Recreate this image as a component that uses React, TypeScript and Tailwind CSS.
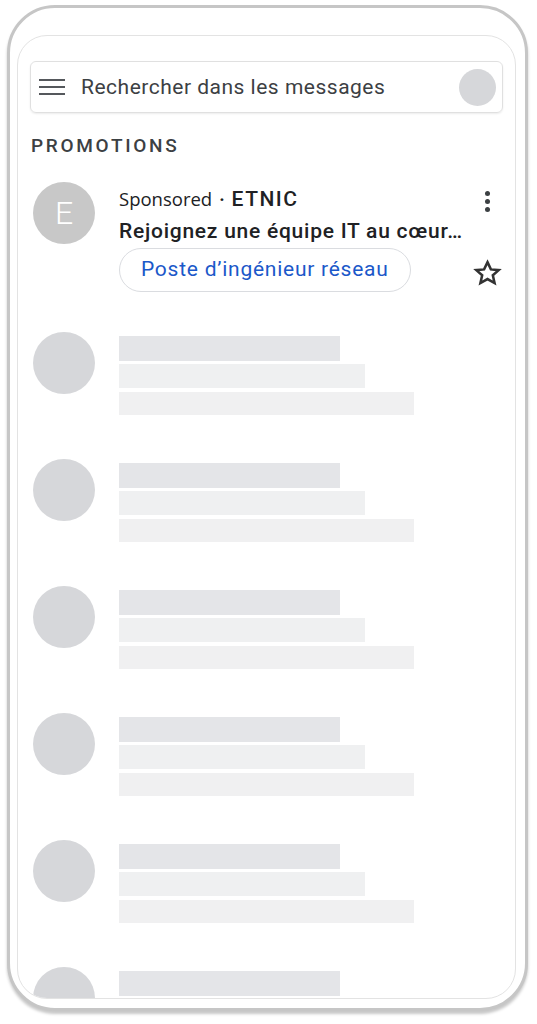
import React from "react";

const rows = [0, 1, 2, 3, 4, 5];

function Skeleton() {
  return (
    <div className="flex items-start pl-[15px]">
      <div className="w-[62px] h-[62px] rounded-full bg-[#d6d7da] shrink-0" />
      <div className="ml-[24px] mt-[4px] flex flex-col gap-[3px]">
        <div className="w-[221px] h-[25px] bg-[#e4e5e8]" />
        <div className="w-[246px] h-[24px] bg-[#eff0f1]" />
        <div className="mt-[1px] w-[295px] h-[23px] bg-[#f0f0f1]" />
      </div>
    </div>
  );
}

export default function App() {
  return (
    <div className="w-[537px] h-[1024px] bg-white overflow-hidden" style={{ fontFamily: "Roboto, 'Noto Sans', sans-serif" }}>
      <div className="ml-[7px] mt-[5px] w-[521px] h-[1006px] rounded-[48px] border-[3px] border-[#c6c6c6] bg-white shadow-[0_3px_3px_rgba(0,0,0,0.22)] px-[7px] pt-[27px]">
        <div className="w-[499px] h-[964px] rounded-[30px] border border-[#e3e3e3] overflow-hidden">
          {/* Search bar */}
          <div className="mx-[12px] mt-[25px] h-[52px] rounded-[6px] border border-[#e0e0e0] shadow-[0_1px_2px_rgba(0,0,0,0.08)] flex items-center pl-[8px] pr-[6px]">
            <div className="w-[26px] flex flex-col gap-[4.5px]">
              <div className="h-[2.5px] bg-[#55585c]" />
              <div className="h-[2.5px] bg-[#55585c]" />
              <div className="h-[2.5px] bg-[#55585c]" />
            </div>
            <span className="ml-[16px] mt-[2px] text-[21px] tracking-[0.5px] text-[#3c4043] flex-1 whitespace-nowrap">Rechercher dans les messages</span>
            <div className="w-[37px] h-[37px] rounded-full bg-[#d6d7da]" />
          </div>

          <div className="mt-[21px] ml-[13px] text-[19px] leading-[24px] font-medium tracking-[2.7px] text-[#3c4043]">
            PROMOTIONS
          </div>

          {/* Ad row */}
          <div className="mt-[24px] flex items-start pl-[15px] pr-[12px]">
            <div className="w-[62px] h-[62px] rounded-full bg-[#c8c8c8] shrink-0 flex items-center justify-center text-white text-[32px] font-light">
              E
            </div>
            <div className="ml-[24px] mt-[3px] flex-1 min-w-0">
              <div className="flex items-baseline h-[28px] leading-[28px] whitespace-nowrap">
                <span className="text-[18.5px] text-[#202124]" style={{ fontFamily: "'Open Sans', sans-serif" }}>Sponsored</span>
                <span className="mx-[7px] text-[18px] text-[#202124] font-bold">·</span>
                <span className="text-[21px] font-medium text-[#202124] tracking-[1.5px]">ETNIC</span>
              </div>
              <div className="mt-[5px] h-[26px] leading-[26px] text-[21px] font-medium tracking-[0.75px] text-[#202124] whitespace-nowrap">
                Rejoignez une équipe IT au cœur…
              </div>
              <div className="mt-[4px] inline-flex items-center h-[44px] px-[21px] rounded-full border border-[#dadce0] text-[21px] tracking-[0.75px] text-[#1b58c9]">
                Poste d’ingénieur réseau
              </div>
            </div>
            <div className="w-[31px] h-[110px] flex flex-col items-center justify-between shrink-0">
              <div className="mt-[9px] flex flex-col gap-[3px]">
                <div className="w-[5px] h-[5px] rounded-full bg-[#3c4043]" />
                <div className="w-[5px] h-[5px] rounded-full bg-[#3c4043]" />
                <div className="w-[5px] h-[5px] rounded-full bg-[#3c4043]" />
              </div>
              <svg width="31" height="29" viewBox="0 0 24 24" className="mb-[4px]">
                <path
                  d="M12 2.6l2.8 6 6.5.6-4.9 4.3 1.45 6.4L12 16.6l-5.85 3.3 1.45-6.4-4.9-4.3 6.5-.6z"
                  fill="none"
                  stroke="#333"
                  strokeWidth="2.1"
                  strokeLinejoin="miter"
                />
              </svg>
            </div>
          </div>

          {/* Skeleton list */}
          <div className="mt-[40px] flex flex-col gap-[44px]">
            {rows.map((r) => (
              <Skeleton key={r} />
            ))}
          </div>
        </div>
      </div>
    </div>
  );
}
